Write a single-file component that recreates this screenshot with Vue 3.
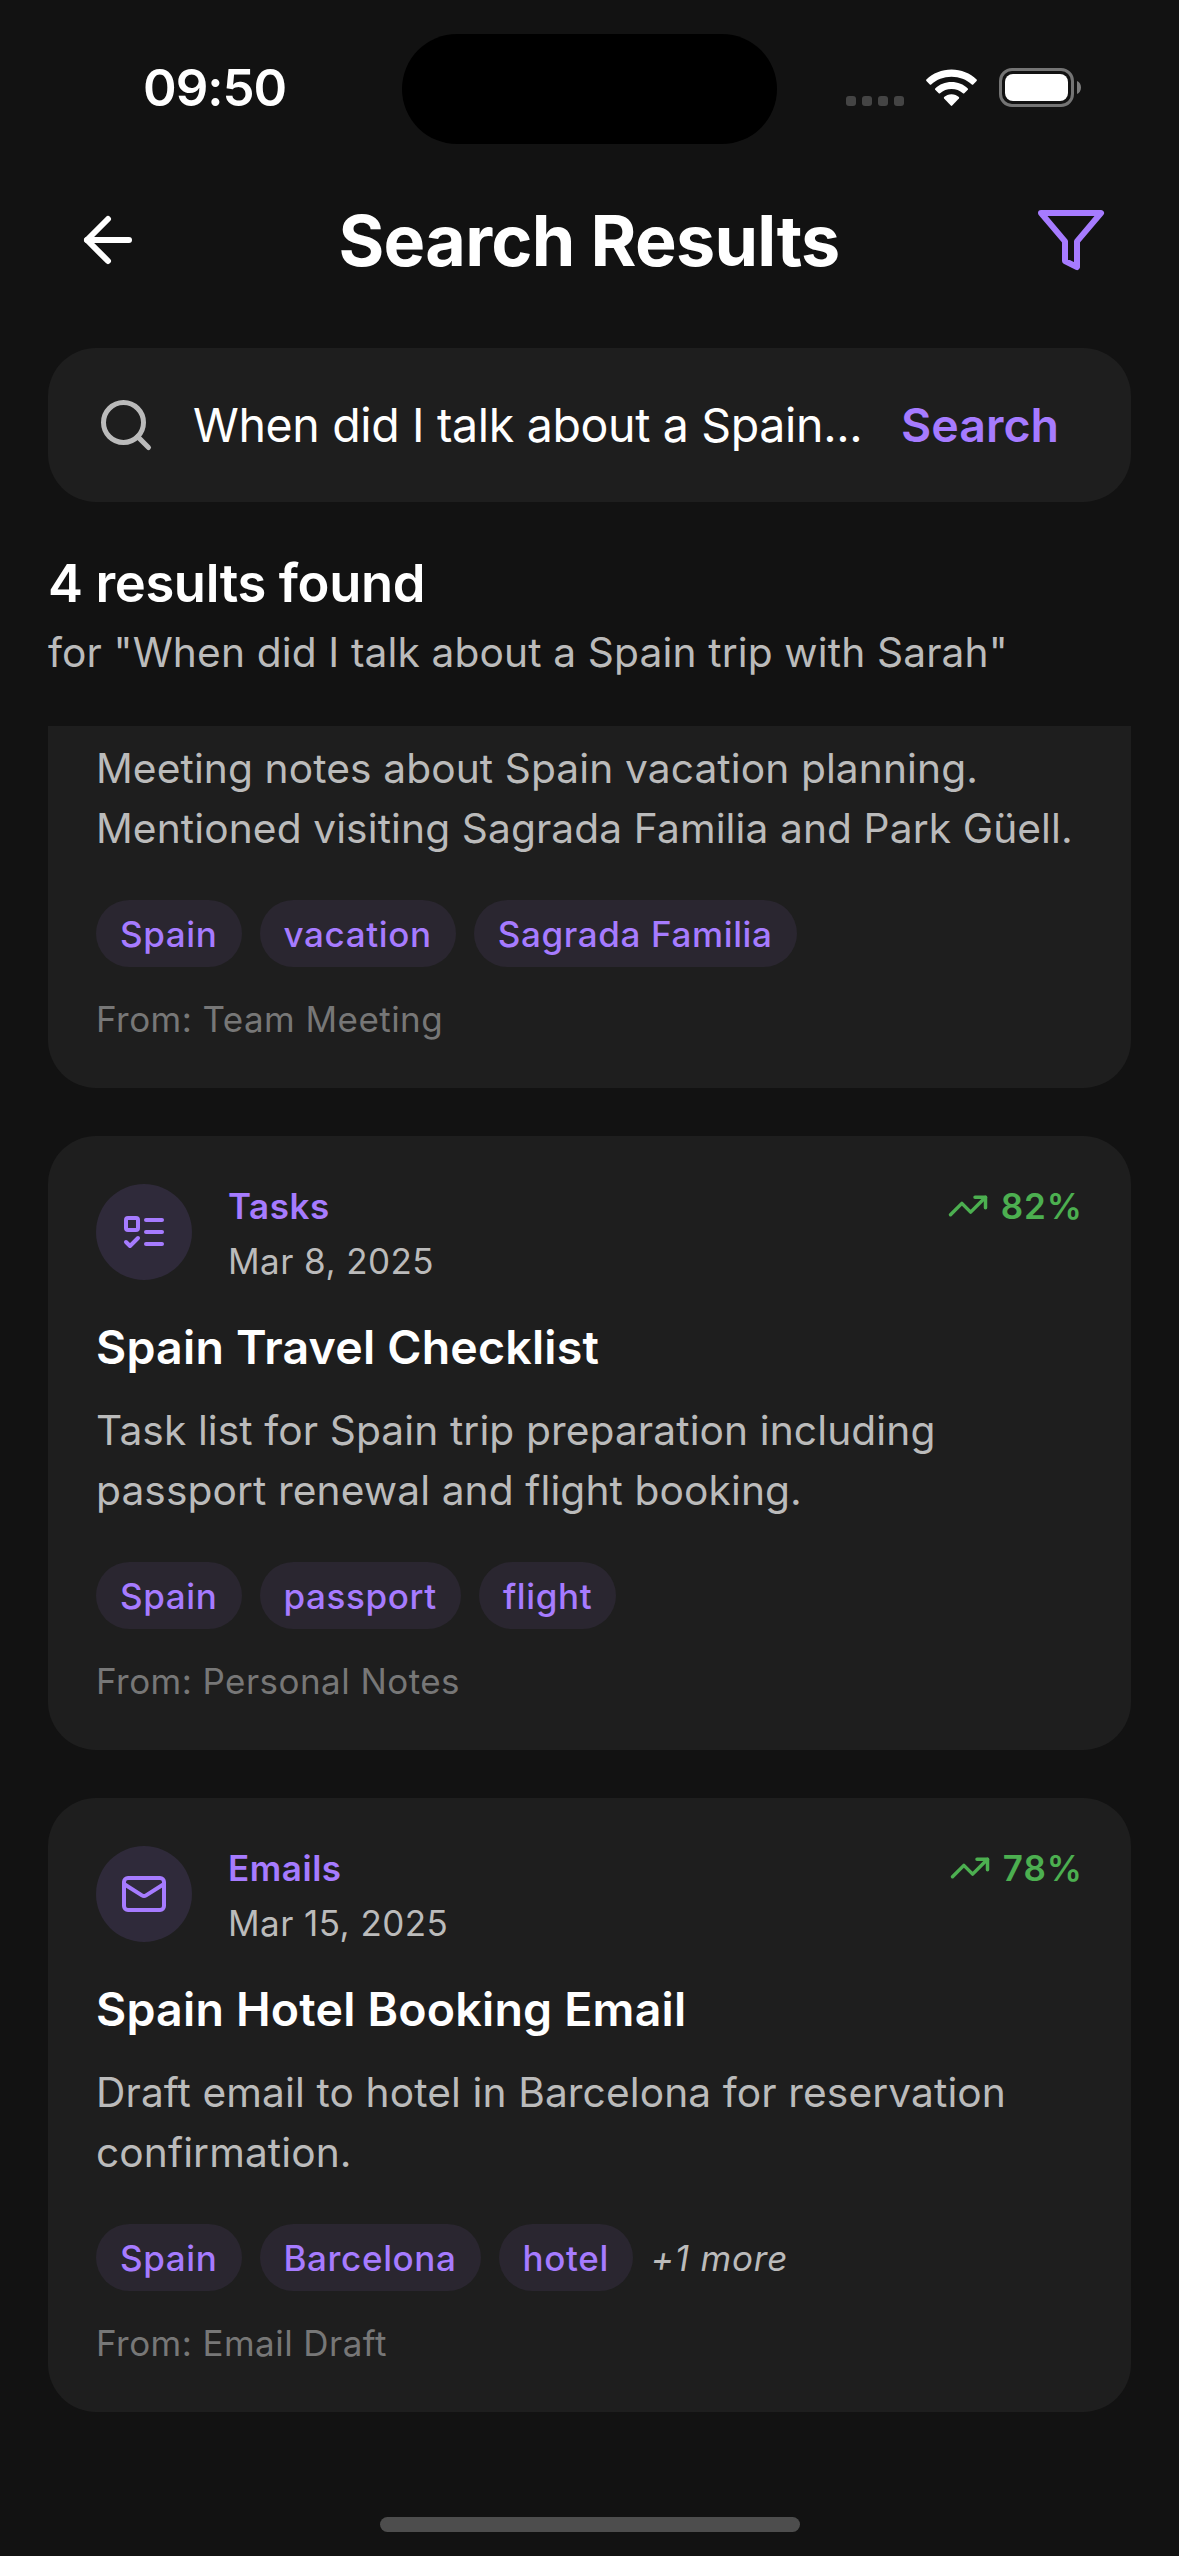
<script setup>
const query = 'When did I talk about a Spain trip with Sarah'

const results = [
  {
    id: 1,
    clipped: true,
    lines: ['Meeting notes about Spain vacation planning.', 'Mentioned visiting Sagrada Familia and Park Güell.'],
    tags: ['Spain', 'vacation', 'Sagrada Familia'],
    source: 'Team Meeting',
  },
  {
    id: 2,
    type: 'Tasks',
    date: 'Mar 8, 2025',
    score: 82,
    title: 'Spain Travel Checklist',
    lines: ['Task list for Spain trip preparation including', 'passport renewal and flight booking.'],
    tags: ['Spain', 'passport', 'flight'],
    source: 'Personal Notes',
  },
  {
    id: 3,
    type: 'Emails',
    date: 'Mar 15, 2025',
    score: 78,
    title: 'Spain Hotel Booking Email',
    lines: ['Draft email to hotel in Barcelona for reservation', 'confirmation.'],
    tags: ['Spain', 'Barcelona', 'hotel'],
    more: 1,
    source: 'Email Draft',
  },
]
</script>

<template>
  <div class="screen">
    <div class="status">
      <span class="time">09:50</span>
      <div class="island"></div>
      <div class="indicators">
        <div class="dots"><i></i><i></i><i></i><i></i></div>
        <svg class="wifi" width="51" height="38" viewBox="0 0 51 38" fill="#fff">
          <path d="M25.500 0.500C35.200 0.500 44.200 4.300 50.600 10.500Q51.200 11.200 50.600 11.900L47.200 15.400Q46.500 16 45.800 15.400C40.400 10.500 33.200 7.700 25.500 7.700S10.600 10.500 5.200 15.400Q4.500 16 3.800 15.400L0.400 11.900Q-0.200 11.200 0.400 10.500C6.800 4.300 15.800 0.500 25.500 0.500Z" />
          <path d="M25.500 13C31.800 13 37.500 15.400 41.800 19.400Q42.400 20.100 41.800 20.800L38.300 24.300Q37.600 24.900 36.900 24.300C33.900 21.600 29.900 20.100 25.500 20.100S17.100 21.600 14.100 24.300Q13.400 24.900 12.700 24.300L9.200 20.800Q8.600 20.100 9.200 19.400C13.500 15.400 19.200 13 25.500 13Z" />
          <path d="M25.500 25.200C28.400 25.200 31 26.300 32.900 28.100Q33.500 28.900 32.900 29.600L26.200 36.600Q25.500 37.300 24.800 36.600L18.100 29.600Q17.500 28.900 18.100 28.100C20 26.300 22.600 25.200 25.500 25.200Z" />
        </svg>
        <svg class="battery" width="83" height="39" viewBox="0 0 83 39">
          <rect x="1.500" y="1.500" width="72" height="36" rx="11.500" fill="none" stroke="#747474" stroke-width="3" />
          <rect x="6" y="6" width="63" height="27" rx="8" fill="#fff" />
          <path d="M78 13c2.600 1 4 3.600 4 6.500s-1.400 5.500-4 6.500z" fill="#7c7c7c" />
        </svg>
      </div>
    </div>

    <header class="header">
      <svg class="icon" width="72" height="72" viewBox="0 0 24 24" stroke="#fff">
        <path d="m12 19-7-7 7-7" />
        <path d="M19 12H5" />
      </svg>
      <h1 class="heading">Search Results</h1>
      <svg class="icon accent" width="72" height="72" viewBox="0 0 24 24">
        <polygon points="22 3 2 3 10 12.46 10 19 14 21 14 12.46 22 3" />
      </svg>
    </header>

    <div class="searchbar">
      <svg class="icon" width="60" height="60" viewBox="0 0 24 24" stroke="#bbb">
        <circle cx="11" cy="11" r="8" />
        <path d="m21 21-4.350-4.350" />
      </svg>
      <span class="query">When did I talk about a Spain...</span>
      <span class="submit">Search</span>
    </div>

    <div class="summary">
      <h2 class="count">4 results found</h2>
      <p class="for">for "{{ query }}"</p>
    </div>

    <main class="list">
      <article v-for="item in results" :key="item.id" class="card" :class="{ clipped: item.clipped }">
        <template v-if="!item.clipped">
          <div class="card-head">
            <div class="badge">
              <svg class="icon accent" width="48" height="48" viewBox="0 0 24 24">
                <template v-if="item.type === 'Tasks'">
                  <rect x="3" y="5" width="6" height="6" rx="1" />
                  <path d="m3 17 2 2 4-4" />
                  <path d="M13 6h8" />
                  <path d="M13 12h8" />
                  <path d="M13 18h8" />
                </template>
                <template v-else>
                  <rect x="2" y="4" width="20" height="16" rx="2" />
                  <path d="m22 7-8.970 5.700a1.940 1.940 0 0 1-2.060 0L2 7" />
                </template>
              </svg>
            </div>
            <div class="meta">
              <span class="type">{{ item.type }}</span>
              <span class="date">{{ item.date }}</span>
            </div>
            <div class="score">
              <svg class="icon" width="42" height="42" viewBox="0 0 24 24" stroke="#4caf50">
                <polyline points="22 7 13.5 15.5 8.5 10.5 2 17" />
                <polyline points="16 7 22 7 22 13" />
              </svg>
              <span>{{ item.score }}%</span>
            </div>
          </div>
          <h3 class="title">{{ item.title }}</h3>
        </template>
        <p class="desc">
          <span v-for="line in item.lines" :key="line">{{ line }}</span>
        </p>
        <div class="tags">
          <span v-for="tag in item.tags" :key="tag" class="tag">{{ tag }}</span>
          <span v-if="item.more" class="more">+{{ item.more }} more</span>
        </div>
        <p class="source">From: {{ item.source }}</p>
      </article>
    </main>

    <div class="home"></div>
  </div>
</template>

<style>
body {
  margin: 0;
  background: #121212;
}
</style>

<style scoped>
.screen {
  display: flex;
  flex-direction: column;
  box-sizing: border-box;
  width: 1179px;
  height: 2556px;
  overflow: hidden;
  background: #121212;
  color: #fff;
  font-family: Inter, "Liberation Sans", sans-serif;
  white-space: nowrap;
}
h1, h2, h3, p {
  margin: 0;
}
.icon {
  display: block;
  flex: none;
  fill: none;
  stroke-width: 2;
  stroke-linecap: round;
  stroke-linejoin: round;
}
.accent {
  stroke: #a67bff;
}
.status {
  display: grid;
  grid-template-columns: 402px 375px 402px;
  height: 144px;
  padding-top: 34px;
  box-sizing: border-box;
  flex: none;
}
.time {
  margin-top: 18px;
  padding-left: 143px;
  font-size: 51px;
  font-weight: 600;
  line-height: 71px;
  letter-spacing: -1px;
}
.island {
  height: 110px;
  border-radius: 55px;
  background: #000;
}
.indicators {
  display: flex;
  align-items: flex-start;
  padding: 34px 0 0 69px;
}
.dots {
  display: flex;
  gap: 6px;
  margin-top: 28px;
}
.dots i {
  width: 10px;
  height: 10px;
  border-radius: 3px;
  background: #444;
}
.wifi {
  margin: 1px 0 0 22px;
}
.battery {
  margin-left: 22px;
}
.header {
  display: flex;
  justify-content: space-between;
  align-items: center;
  height: 72px;
  margin-top: 60px;
  padding: 0 72px;
  flex: none;
}
.heading {
  padding-top: 2px;
  margin-right: 1px;
  font-size: 70px;
  font-weight: 700;
  line-height: 84px;
  letter-spacing: -0.7px;
}
.searchbar {
  display: flex;
  align-items: center;
  height: 154px;
  margin: 72px 48px 0;
  padding: 0 72px 0 48px;
  box-sizing: border-box;
  border-radius: 48px;
  background: #1e1e1e;
  font-size: 46.5px;
  line-height: 56px;
  flex: none;
}
.query {
  margin-left: 37px;
  flex: 1;
  letter-spacing: -0.35px;
}
.submit {
  color: #a67bff;
  font-weight: 600;
}
.summary {
  padding: 48px 48px 0;
  flex: none;
}
.count {
  font-size: 52.5px;
  font-weight: 600;
  line-height: 66px;
  letter-spacing: -0.38px;
}
.for {
  margin-top: 12px;
  font-size: 40.7px;
  line-height: 50px;
  letter-spacing: 0.13px;
  color: #bbb;
}
.list {
  display: flex;
  flex-direction: column;
  gap: 48px;
  margin-top: 48px;
  padding: 0 48px;
  flex: none;
}
.card {
  padding: 48px 48px 47px;
  border-radius: 48px;
  background: #1e1e1e;
}
.card.clipped {
  padding-top: 13px;
  border-radius: 0 0 48px 48px;
}
.card-head {
  display: flex;
  height: 96px;
  margin-bottom: 38px;
}
.badge {
  display: flex;
  align-items: center;
  justify-content: center;
  width: 96px;
  height: 96px;
  border-radius: 50%;
  background: #2f2a3a;
}
.meta {
  display: flex;
  flex-direction: column;
  gap: 11px;
  margin-left: 36px;
  flex: 1;
  font-size: 35px;
  line-height: 44px;
}
.type {
  color: #a67bff;
  font-weight: 600;
  letter-spacing: 0.55px;
}
.date {
  color: #bbb;
  letter-spacing: 0.45px;
}
.score {
  display: flex;
  align-items: center;
  gap: 12px;
  height: 44px;
  color: #4caf50;
  font-size: 35px;
  font-weight: 600;
  line-height: 44px;
  letter-spacing: 1px;
}
.title {
  font-size: 46.5px;
  font-weight: 600;
  line-height: 58px;
  margin-bottom: 25px;
  letter-spacing: 0.2px;
}
.desc {
  display: flex;
  flex-direction: column;
  font-size: 40.7px;
  line-height: 60px;
  letter-spacing: 0.1px;
  color: #bbb;
}
.tags {
  display: flex;
  align-items: center;
  gap: 18px;
  margin-top: 41px;
}
.tag {
  height: 67px;
  padding: 1px 24px 0;
  box-sizing: border-box;
  border-radius: 36px;
  background: #2a2630;
  color: #a67bff;
  font-size: 35px;
  font-weight: 500;
  line-height: 66px;
  letter-spacing: 0.63px;
}
.more {
  padding-top: 1px;
  font-size: 35px;
  font-style: italic;
  line-height: 66px;
  letter-spacing: 0.8px;
  color: #bbb;
}
.source {
  margin-top: 30px;
  font-size: 35px;
  line-height: 44px;
  letter-spacing: 0.45px;
  color: #777;
}
.home {
  align-self: center;
  width: 420px;
  height: 15px;
  margin-top: 105px;
  border-radius: 8px;
  background: #4d4d4d;
  flex: none;
}
</style>
